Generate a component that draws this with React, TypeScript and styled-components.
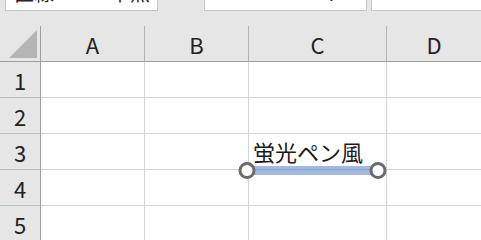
import React from 'react';
import styled, { createGlobalStyle } from 'styled-components';

const GlobalStyle = createGlobalStyle`
  html, body {
    margin: 0;
    padding: 0;
    background: #e6e6e6;
    overflow: hidden;
  }
`;

const Page = styled.div`
  width: 481px;
  height: 240px;
  display: flex;
  flex-direction: column;
  font-family: 'Noto Sans CJK JP', 'Noto Sans', sans-serif;
  overflow: hidden;
`;

const Ribbon = styled.div`
  height: 26px;
  display: flex;
  align-items: flex-start;
  flex-shrink: 0;
  overflow: hidden;
`;

const FieldBox = styled.div<{ left: number; width: number }>`
  flex-shrink: 0;
  margin-left: ${p => p.left}px;
  width: ${p => p.width}px;
  height: 10px;
  background: #ffffff;
  border: 1px solid #c6c6c6;
  border-top: none;
  display: flex;
  align-items: flex-end;
  overflow: hidden;
`;

const FieldText = styled.span`
  font-size: 20px;
  line-height: 20px;
  color: #262626;
  margin: 0 0 7px 8px;
  white-space: nowrap;
`;

const Sheet = styled.div`
  position: relative;
  flex: 1;
  display: grid;
  grid-template-columns: 41px 104px 104px 138px 1fr;
  grid-auto-rows: 36px;
  background: #ffffff;
`;

const Corner = styled.div`
  background: #e6e6e6;
  border-right: 1px solid #9e9e9e;
  border-bottom: 1px solid #9e9e9e;
  display: flex;
  align-items: flex-end;
  justify-content: flex-end;
  padding: 0 3px 3px 0;
`;

const Triangle = styled.div`
  width: 28px;
  height: 28px;
  background: #b4b4b4;
  clip-path: polygon(100% 0, 100% 100%, 0 100%);
`;

const ColHead = styled.div<{ last?: boolean }>`
  background: #e6e6e6;
  border-right: ${p => (p.last ? 'none' : '1px solid #b4b4b4')};
  border-bottom: 1px solid #9e9e9e;
  display: flex;
  align-items: center;
  justify-content: center;
  font-size: 22px;
  color: #222222;
`;

const RowHead = styled.div`
  background: #e6e6e6;
  border-right: 1px solid #9e9e9e;
  border-bottom: 1px solid #bdbdbd;
  display: flex;
  align-items: center;
  justify-content: center;
  font-size: 22px;
  color: #222222;
`;

const Cell = styled.div<{ last?: boolean }>`
  background: #ffffff;
  border-right: ${p => (p.last ? 'none' : '1px solid #d4d4d4')};
  border-bottom: 1px solid #d4d4d4;
`;

const ShapeLabel = styled.div`
  position: absolute;
  left: 253px;
  top: 114px;
  font-size: 22px;
  line-height: 22px;
  color: #1a1a1a;
  white-space: nowrap;
`;

const LineShape = styled.svg`
  position: absolute;
  left: 236px;
  top: 133px;
  overflow: visible;
`;

const columns = ['A', 'B', 'C', 'D'];
const rows = [1, 2, 3, 4, 5];

export default function App() {
  return (
    <Page>
      <GlobalStyle />
      <Ribbon>
        <FieldBox left={5} width={151}>
          <FieldText>直線　　 - 中点</FieldText>
        </FieldBox>
        <FieldBox left={46} width={161}>
          <FieldText style={{ marginLeft: 118 }}>⌄</FieldText>
        </FieldBox>
        <FieldBox left={4} width={120} />
      </Ribbon>
      <Sheet>
        <Corner>
          <Triangle />
        </Corner>
        {columns.map((c, i) => (
          <ColHead key={c} last={i === columns.length - 1}>{c}</ColHead>
        ))}
        {rows.map(r => (
          <React.Fragment key={r}>
            <RowHead>{r}</RowHead>
            {columns.map((c, i) => (
              <Cell key={c + r} last={i === columns.length - 1} />
            ))}
          </React.Fragment>
        ))}
        <ShapeLabel>蛍光ペン風</ShapeLabel>
        <LineShape width="154" height="24" viewBox="0 0 154 24">
          <line x1="11" y1="11.5" x2="141" y2="11.5" stroke="rgba(68,114,196,0.5)" strokeWidth="9" />
          <circle cx="11" cy="11.5" r="7" fill="#ffffff" stroke="#6b6b6b" strokeWidth="3" />
          <circle cx="142" cy="11.5" r="7" fill="#ffffff" stroke="#6b6b6b" strokeWidth="3" />
        </LineShape>
      </Sheet>
    </Page>
  );
}
